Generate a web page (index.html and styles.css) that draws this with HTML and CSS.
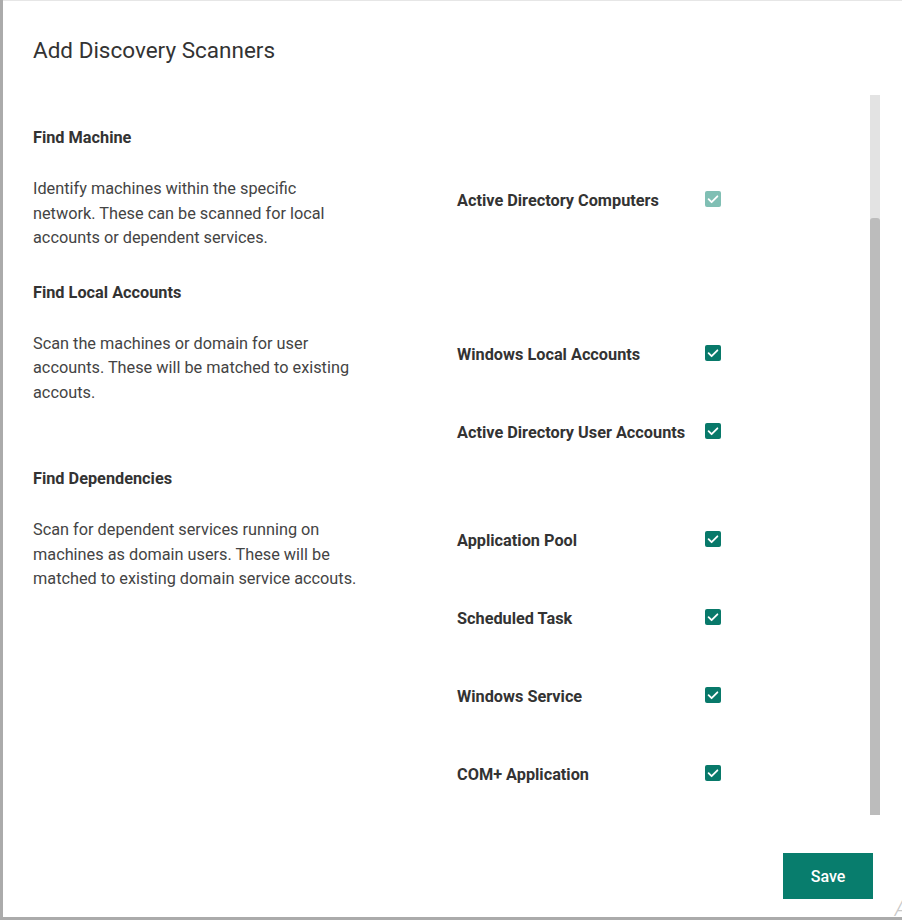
FILE: index.html
```html
<!DOCTYPE html>
<html lang="en">
<head>
<meta charset="utf-8">
<title>Add Discovery Scanners</title>
<link rel="stylesheet" href="styles.css">
</head>
<body>
<div class="page">
  <div class="dialog">
    <div class="dialog-header">
      <h1 class="dialog-title">Add Discovery Scanners</h1>
    </div>
    <div class="dialog-body">
      <div class="content">
        <div class="descriptions">
          <section class="section section-first">
            <h2 class="section-title">Find Machine</h2>
            <p class="section-text">Identify machines within the specific network. These can be scanned for local accounts or dependent services.</p>
          </section>
          <section class="section section-second">
            <h2 class="section-title">Find Local Accounts</h2>
            <p class="section-text">Scan the machines or domain for user accounts. These will be matched to existing accouts.</p>
          </section>
          <section class="section">
            <h2 class="section-title">Find Dependencies</h2>
            <p class="section-text">Scan for dependent services running on machines as domain users. These will be matched to existing domain service accouts.</p>
          </section>
        </div>
        <div class="scanners">
          <label class="scanner">
            <span class="scanner-name">Active Directory Computers</span>
            <span class="checkbox checkbox-disabled"><svg viewBox="0 0 16 16" width="16" height="16"><path d="M3.6 8.2l3 3 5.8-5.9" fill="none" stroke="#fff" stroke-width="1.8" stroke-linecap="round" stroke-linejoin="round"/></svg></span>
          </label>
          <div class="scanner scanner-empty"></div>
          <label class="scanner">
            <span class="scanner-name">Windows Local Accounts</span>
            <span class="checkbox"><svg viewBox="0 0 16 16" width="16" height="16"><path d="M3.6 8.2l3 3 5.8-5.9" fill="none" stroke="#fff" stroke-width="1.8" stroke-linecap="round" stroke-linejoin="round"/></svg></span>
          </label>
          <label class="scanner">
            <span class="scanner-name">Active Directory User Accounts</span>
            <span class="checkbox"><svg viewBox="0 0 16 16" width="16" height="16"><path d="M3.6 8.2l3 3 5.8-5.9" fill="none" stroke="#fff" stroke-width="1.8" stroke-linecap="round" stroke-linejoin="round"/></svg></span>
          </label>
          <div class="scanner-spacer"></div>
          <label class="scanner">
            <span class="scanner-name">Application Pool</span>
            <span class="checkbox"><svg viewBox="0 0 16 16" width="16" height="16"><path d="M3.6 8.2l3 3 5.8-5.9" fill="none" stroke="#fff" stroke-width="1.8" stroke-linecap="round" stroke-linejoin="round"/></svg></span>
          </label>
          <label class="scanner">
            <span class="scanner-name">Scheduled Task</span>
            <span class="checkbox"><svg viewBox="0 0 16 16" width="16" height="16"><path d="M3.6 8.2l3 3 5.8-5.9" fill="none" stroke="#fff" stroke-width="1.8" stroke-linecap="round" stroke-linejoin="round"/></svg></span>
          </label>
          <label class="scanner">
            <span class="scanner-name">Windows Service</span>
            <span class="checkbox"><svg viewBox="0 0 16 16" width="16" height="16"><path d="M3.6 8.2l3 3 5.8-5.9" fill="none" stroke="#fff" stroke-width="1.8" stroke-linecap="round" stroke-linejoin="round"/></svg></span>
          </label>
          <label class="scanner">
            <span class="scanner-name">COM+ Application</span>
            <span class="checkbox"><svg viewBox="0 0 16 16" width="16" height="16"><path d="M3.6 8.2l3 3 5.8-5.9" fill="none" stroke="#fff" stroke-width="1.8" stroke-linecap="round" stroke-linejoin="round"/></svg></span>
          </label>
        </div>
      </div>
      <div class="scrollbar"><div class="scrollbar-thumb"></div></div>
    </div>
    <div class="dialog-footer">
      <button class="btn-save" type="button">Save</button>
    </div>
    <span class="watermark">A</span>
  </div>
</div>
</body>
</html>
```

FILE: styles.css
```css
* { box-sizing: border-box; }

html, body {
  margin: 0;
  padding: 0;
}

body {
  background: #ababab;
  font-family: Roboto, "Liberation Sans", Arial, sans-serif;
  color: #333;
  overflow: hidden;
}

.page {
  display: flex;
  width: 902px;
  height: 920px;
  padding: 0 0 3px 3px;
}

.dialog {
  position: relative;
  flex: 1;
  display: flex;
  flex-direction: column;
  background: #fff;
  border-top: 1px solid #e6e6e6;
  overflow: hidden;
}

.dialog-header {
  height: 94px;
  padding: 35px 30px 0;
}

.dialog-title {
  margin: 0;
  font-size: 22.5px;
  font-weight: 400;
  line-height: 28px;
  color: #333;
}

.dialog-body {
  height: 720px;
  display: flex;
  padding-left: 30px;
}

.content {
  flex: 1;
  display: flex;
  gap: 99px;
  padding-top: 33px;
}

.descriptions {
  width: 325px;
  flex-shrink: 0;
}

.section-first { margin-bottom: 32px; }
.section-second { margin-bottom: 64px; }

.section-title {
  margin: 0 0 29px;
  font-size: 16.3px;
  font-weight: 700;
  line-height: 20px;
  color: #333;
}

.section-text {
  margin: 0;
  font-size: 16.3px;
  line-height: 24.5px;
  color: #444;
}

.scanners {
  width: 264px;
  display: flex;
  flex-direction: column;
  padding-top: 33px;
}

.scanner {
  height: 78px;
  display: flex;
  align-items: center;
  justify-content: space-between;
}

.scanner-empty { height: 76px; }

.scanner-spacer { height: 30px; }

.scanner-name {
  font-size: 16.3px;
  font-weight: 700;
  color: #333;
}

.checkbox {
  width: 16px;
  height: 16px;
  border-radius: 2px;
  background: #08796a;
  display: flex;
  margin-top: -2px;
}

.checkbox-disabled {
  background: #80bfb4;
}

.scrollbar {
  width: 10px;
  margin-right: 22px;
  margin-left: 8px;
  background: #e3e3e3;
  display: flex;
  flex-direction: column;
  justify-content: flex-end;
}

.scrollbar-thumb {
  height: 597px;
  background: #bcbcbc;
  border-radius: 3px 3px 0 0;
}

.dialog-footer {
  flex: 1;
  display: flex;
  justify-content: flex-end;
  align-items: flex-start;
  padding: 38px 29px 0 0;
}

.btn-save {
  width: 90px;
  height: 46px;
  border: none;
  border-radius: 0;
  background: #087d6d;
  color: #fff;
  font-family: Roboto, "Liberation Sans", Arial, sans-serif;
  font-size: 16px;
  font-weight: 500;
}

.watermark {
  position: absolute;
  right: -6px;
  bottom: -4px;
  font-size: 22px;
  line-height: 24px;
  color: #c8c8c8;
  font-style: italic;
  font-weight: 300;
}
```
